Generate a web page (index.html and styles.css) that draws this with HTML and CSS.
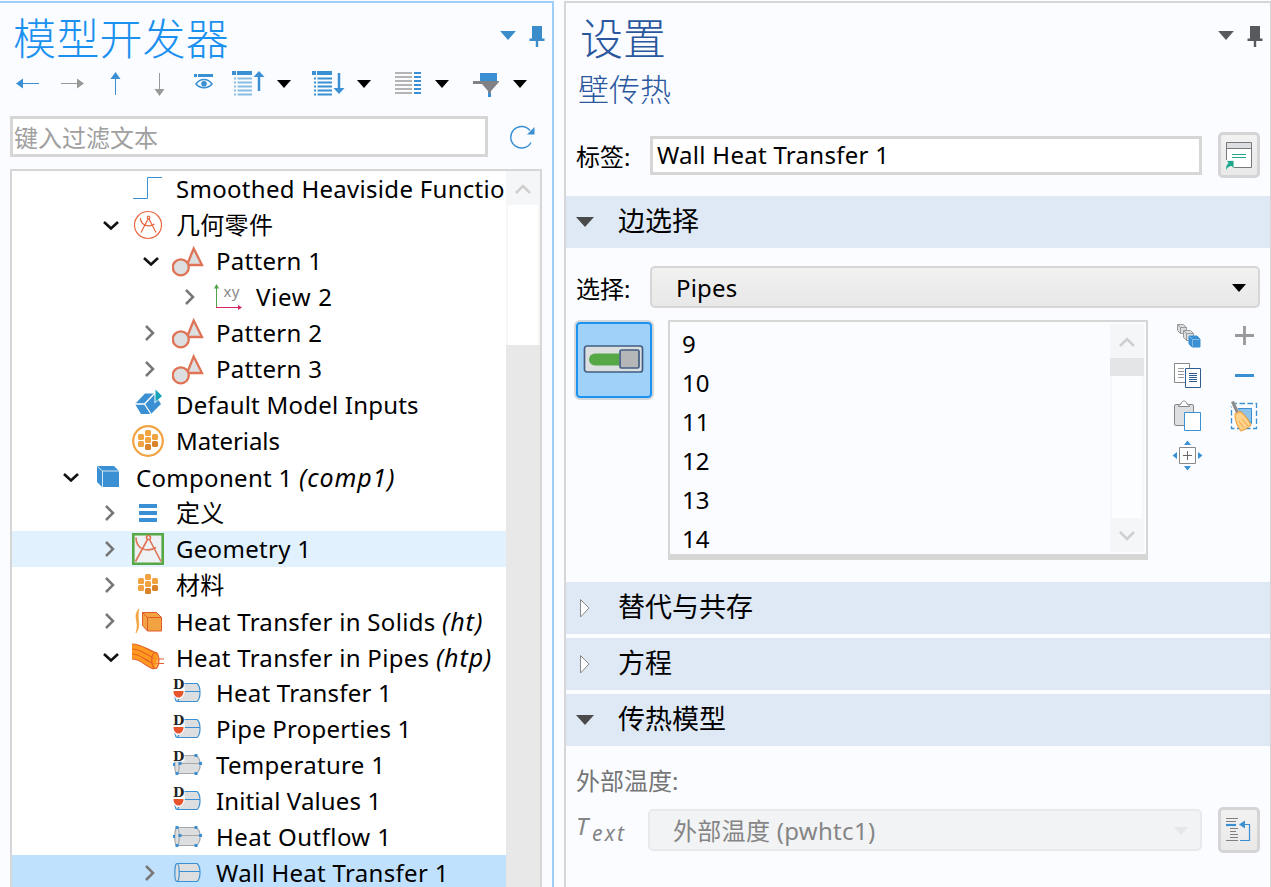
FILE: index.html
```html
<!DOCTYPE html>
<html lang="zh-CN">
<head>
<meta charset="utf-8">
<title>模型开发器</title>
<link rel="stylesheet" href="styles.css">
</head>
<body>
<svg class="defs" width="0" height="0">
  <symbol id="down" viewBox="0 0 24 24"><path d="M6 9l7 6.500L20 9" fill="none" stroke="#111" stroke-width="2.600"/></symbol>
  <symbol id="right" viewBox="0 0 24 24"><path d="M8 5l7 7-7 7" fill="none" stroke="#777" stroke-width="2.500"/></symbol>
  <symbol id="caret" viewBox="0 0 14 8"><path d="M0 0h14L7 8z" fill="currentColor"/></symbol>
  <symbol id="pin" viewBox="0 0 16 22"><path d="M3 0h10v12.500h2.500v2.500H9.200v6H6.800v-6H.5v-2.500H3z" fill="currentColor"/></symbol>
  <symbol id="shapes" viewBox="0 0 32 32"><g fill="#dcdedf" stroke="#e07355" stroke-width="2.300"><path d="M21.700 3.500L15 20h15z"/><circle cx="8.800" cy="22.300" r="8"/></g></symbol>
  <symbol id="grid" viewBox="0 0 32 32"><g fill="#f0a340"><rect x="13" y="5" width="6" height="6" rx="1.500"/><rect x="13" y="12" width="6" height="6" rx="1.500"/><rect x="6" y="9" width="6" height="6" rx="1.500"/><rect x="20" y="9" width="6" height="6" rx="1.500"/><rect x="6" y="16" width="6" height="6" rx="1.500"/></g><g fill="#d9822a"><rect x="20" y="16" width="6" height="6" rx="1.500"/><rect x="13" y="19" width="6" height="6" rx="1.500"/></g></symbol>
  <symbol id="pipe" viewBox="0 0 32 32"><path d="M5 6.500h20c4 3 4 15 0 18H5z" fill="#dcdee0"/><path d="M5 6.500h20c4 3 4 15 0 18H5M7 14.500h21" fill="none" stroke="#3a90d2" stroke-width="1.200"/><ellipse cx="5" cy="15.500" rx="2.200" ry="9" fill="#dcdee0" stroke="#3a90d2" stroke-width="1.200"/></symbol>
  <symbol id="gpipe" viewBox="0 0 32 32"><path d="M5 6.500h19c6 3 6 15 0 18H5z" fill="#dcdee0"/><path d="M5 6.500h19c5.500 3 5.500 15 0 18H5M7 14.500h21" fill="none" stroke="#a5a7aa" stroke-width="1.200"/><ellipse cx="5" cy="15.500" rx="2.200" ry="9" fill="#dcdee0" stroke="#a5a7aa" stroke-width="1.200"/><path d="M3.500 5h3v3h-3zM22.500 5h3v3h-3zM1 14h2v3H1zM6.500 13h3v3h-3zM27 13h3v3h-3zM3.500 23h3v3h-3zM22.500 23h3v3h-3z" fill="#3a90d2"/></symbol>
  <symbol id="dpipe" viewBox="0 0 32 32"><use href="#pipe"/><path d="M0 0h12.500v12H13c0 6-3 10-6.500 10S0 18 0 12z" fill="#fff"/><path d="M1.500 14h10c0 4-2 6.500-5 6.500s-5-2.500-5-6.500z" fill="#e8552d"/></symbol>
</svg>

<main class="workspace">
<section class="builder">
  <header class="builder-head">
    <h1>模型开发器</h1>
    <svg class="head-caret" width="16" height="9"><use href="#caret"/></svg>
    <svg width="16" height="22"><use href="#pin"/></svg>
  </header>

  <div class="toolbar">
    <svg width="25" height="28" viewBox="0 0 25 28"><path d="M6 13.500h18" stroke="#3a90d2"/><path d="M1 13.500l7-5v10z" fill="#3a90d2"/></svg>
    <svg class="t2" width="24" height="28" viewBox="0 0 24 28"><path d="M0 13.500h17" stroke="#999"/><path d="M23 13.500l-7-5v10z" fill="#999"/></svg>
    <svg class="t3" width="12" height="28" viewBox="0 0 12 28"><path d="M5.500 8v17" stroke="#3a90d2"/><path d="M5.500 2l5 7h-10z" fill="#3a90d2"/></svg>
    <svg class="t4" width="12" height="28" viewBox="0 0 12 28"><path d="M5.500 3v18" stroke="#999"/><path d="M5.500 26l5-7h-10z" fill="#999"/></svg>
    <svg class="t5" width="20" height="28" viewBox="0 0 20 28"><path d="M0 4h3v3H0zM4 4h15v3H4z" fill="#3a90d2"/><path d="M2 14c4-6 12-6 16 0-4 5-12 5-16 0z" fill="none" stroke="#3a90d2" stroke-width="1.600"/><circle cx="10" cy="13.700" r="2.800" fill="#3a90d2"/></svg>
    <svg class="t6" width="33" height="28" viewBox="0 0 33 28"><path d="M0 1h4v4H0zM5 1h15v4H5z" fill="#3a90d2"/><path d="M2 8.500h2m1.500 0H20M2 12.500h2m1.500 0H20M2 16.500h2m1.500 0H20M2 20.500h2m1.500 0H20M2 24.500h2m1.500 0H20" stroke="#8abce3" stroke-width="2"/><path d="M27 5v16" stroke="#3a90d2" stroke-width="2.500"/><path d="M27 1l5.500 6h-11z" fill="#3a90d2"/></svg>
    <svg class="c1" width="14" height="8"><use href="#caret"/></svg>
    <svg class="t7" width="33" height="28" viewBox="0 0 33 28"><path d="M0 1h4v4H0zM5 1h15v4H5z" fill="#3a90d2"/><path d="M2 8.500h2m1.500 0H20M2 12.500h2m1.500 0H20M2 16.500h2m1.500 0H20M2 20.500h2m1.500 0H20M2 24.500h2m1.500 0H20" stroke="#3a90d2" stroke-width="2"/><path d="M27 3v16" stroke="#3a90d2" stroke-width="2.500"/><path d="M27 24l5.500-6h-11z" fill="#3a90d2"/></svg>
    <svg class="c2" width="14" height="8"><use href="#caret"/></svg>
    <svg class="t8" width="27" height="28" viewBox="0 0 27 28"><path d="M0 3h17M0 7h17M0 11h17M0 15h17M0 19h17M0 23h17" stroke="#b4b4b4" stroke-width="2"/><path d="M19 3h7M19 7h7M19 11h7M19 15h7M19 19h7M19 23h7" stroke="#3a90d2" stroke-width="2"/></svg>
    <svg class="c3" width="14" height="8"><use href="#caret"/></svg>
    <svg class="t9" width="27" height="28" viewBox="0 0 27 28"><path d="M7 3h17v8H7zM15 23h3v4h-3z" fill="#3a90d2"/><path d="M0 11h26v1l-8 9v2h-3v-2l-6-7H0z" fill="#808286"/></svg>
    <svg class="c4" width="14" height="8"><use href="#caret"/></svg>
  </div>

  <div class="search-row">
    <div class="search">键入过滤文本</div>
    <svg width="26" height="26" viewBox="0 0 26 26"><path d="M21 18.500A10.800 10.800 0 1 1 20 6.500" fill="none" stroke="#3a90d2" stroke-width="1.400"/><path d="M24.500 3v7.500H17z" fill="#3a90d2"/></svg>
  </div>

  <div class="tree">
    <div class="rows">
      <div class="row l2"><i class="tw"></i><svg class="ic" viewBox="0 0 32 32"><path d="M1 25.500h14.500v-21H30" fill="none" stroke="#3a90d2"/></svg><span>Smoothed Heaviside Functio</span></div>
      <div class="row l2"><svg class="tw"><use href="#down"/></svg><svg class="ic" viewBox="0 0 32 32"><g fill="none" stroke="#e8663f" stroke-width="1.200"><circle cx="16" cy="16" r="13.500"/><circle cx="16.500" cy="8.500" r="1.300"/><path d="M16 10L9 23.500M17 10l7 13.500M8.500 9c0 7 8 10 14 6"/></g></svg><span>几何零件</span></div>
      <div class="row l3"><svg class="tw"><use href="#down"/></svg><svg class="ic"><use href="#shapes"/></svg><span>Pattern 1</span></div>
      <div class="row l4"><svg class="tw"><use href="#right"/></svg><svg class="ic" viewBox="0 0 32 32"><path d="M4.500 6v20.500" stroke="#4fa347"/><path d="M4.500 3L7 7.500H2z" fill="#4fa347"/><path d="M4 26.500h23" stroke="#d6245c"/><path d="M30 26.500l-4-2.500v5z" fill="#d6245c"/><text x="11.500" y="16" class="xy">xy</text></svg><span class="wide">View 2</span></div>
      <div class="row l3"><svg class="tw"><use href="#right"/></svg><svg class="ic"><use href="#shapes"/></svg><span>Pattern 2</span></div>
      <div class="row l3"><svg class="tw"><use href="#right"/></svg><svg class="ic"><use href="#shapes"/></svg><span>Pattern 3</span></div>
      <div class="row l2"><i class="tw"></i><svg class="ic" viewBox="0 0 32 32"><path d="M3 15L13 4.500h9L29 15 19 25H9z" fill="#3a90d2"/><path d="M3 15h9.500L22 5M12.500 15l6.500 10" fill="none" stroke="#fff" stroke-width="1.300"/><path d="M22.500-1v15.500L31 7z" fill="#fff"/><path d="M23.500.5v12.500l6.500-6z" fill="#16a2b8"/></svg><span class="mid">Default Model Inputs</span></div>
      <div class="row l2"><i class="tw"></i><svg class="ic" viewBox="0 0 32 32"><circle cx="16" cy="16" r="14.800" fill="#fff" stroke="#f0a340" stroke-width="2.200"/><use href="#grid"/></svg><span class="tight">Materials</span></div>
      <div class="row l1"><svg class="tw"><use href="#down"/></svg><svg class="ic" viewBox="0 0 32 32"><path d="M5 5h17l5 5v16H10l-5-5z" fill="#3a90d2"/><path d="M5.500 5.500l5 4.500H27M10.500 10v16" fill="none" stroke="#d7e9f7"/></svg><span>Component 1 <em>(comp1)</em></span></div>
      <div class="row l2"><svg class="tw"><use href="#right"/></svg><svg class="ic" viewBox="0 0 32 32"><path d="M7 7h18v4H7zM7 14h18v4H7zM7 21h18v4H7z" fill="#3a90d2"/></svg><span>定义</span></div>
      <div class="row l2 hover"><svg class="tw"><use href="#right"/></svg><svg class="ic" viewBox="0 0 32 32"><path d="M1.300 1.300h29.400v29.400H1.300z" fill="#edf1f4" stroke="#55a845" stroke-width="2.600"/><g fill="none" stroke="#e07355" stroke-width="1.600"><circle cx="16.500" cy="4.500" r="2"/><path d="M15.500 6.500L3.500 28.500M17.500 6.500l11.500 22M4 4.500c0 12 11 15 20 10"/></g></svg><span>Geometry 1</span></div>
      <div class="row l2"><svg class="tw"><use href="#right"/></svg><svg class="ic"><use href="#grid"/></svg><span>材料</span></div>
      <div class="row l2"><svg class="tw"><use href="#right"/></svg><svg class="ic" viewBox="0 0 32 32"><path d="M7 4c-7 8 1 12-3 24 6-8 0-14 3-24z" fill="#f0a340" stroke="#f0a340" stroke-width=".7"/><path d="M10.500 7.500h14l5 5v13.500h-14l-5-5.500z" fill="#f0a340" stroke="#e4582b"/><path d="M10.500 7.500l5 5h14M15.500 12.500V26" fill="none" stroke="#e4582b"/></svg><span>Heat Transfer in Solids <em>(ht)</em></span></div>
      <div class="row l2"><svg class="tw"><use href="#down"/></svg><svg class="ic" viewBox="0 0 32 32"><path d="M0 3c10 0 15 6 26 9l-3 16C14 26 10 18 0 18z" fill="#ff9a1f"/><path d="M0 3c10 0 15 6 25 9M0 8c9 0 14 6 22 9M0 13c8 0 13 6 20 9M0 18c10 0 13 8 22 10M20 18h12M21 22.500h11" fill="none" stroke="#e4602b" stroke-width="1.200"/><ellipse cx="23.300" cy="19.500" rx="3.600" ry="8" fill="#ff9a1f" fill-opacity=".7" stroke="#e4602b" stroke-width="1.200"/></svg><span>Heat Transfer in Pipes <em>(htp)</em></span></div>
      <div class="row l3"><i class="tw"></i><svg class="ic" viewBox="0 0 32 32"><use href="#dpipe"/><text x="1" y="11.500" class="d-letter">D</text></svg><span class="mid">Heat Transfer 1</span></div>
      <div class="row l3"><i class="tw"></i><svg class="ic" viewBox="0 0 32 32"><use href="#dpipe"/><text x="1" y="11.500" class="d-letter">D</text></svg><span class="mid">Pipe Properties 1</span></div>
      <div class="row l3"><i class="tw"></i><svg class="ic" viewBox="0 0 32 32"><use href="#gpipe"/><path d="M0 0h12.500v12.500H0z" fill="#fff"/><text x="1" y="11.500" class="d-letter">D</text></svg><span>Temperature 1</span></div>
      <div class="row l3"><i class="tw"></i><svg class="ic" viewBox="0 0 32 32"><use href="#dpipe"/><text x="1" y="11.500" class="d-letter">D</text></svg><span class="low">Initial Values 1</span></div>
      <div class="row l3"><i class="tw"></i><svg class="ic"><use href="#gpipe"/></svg><span class="high">Heat Outflow 1</span></div>
      <div class="row l3 selected"><svg class="tw"><use href="#right"/></svg><svg class="ic"><use href="#pipe"/></svg><span>Wall Heat Transfer 1</span></div>
    </div>
    <div class="scroll">
      <div class="scroll-btn"><svg width="16" height="12" viewBox="0 0 16 12"><path d="M1 10l7-7 7 7" fill="none" stroke="#cfcfcf" stroke-width="2.500"/></svg></div>
      <div class="scroll-gap"></div>
      <div class="scroll-thumb"></div>
    </div>
  </div>
</section>

<section class="settings">
  <header class="settings-head">
    <h2>设置</h2>
    <svg class="head-caret" width="16" height="9"><use href="#caret"/></svg>
    <svg width="16" height="22"><use href="#pin"/></svg>
  </header>
  <h3>壁传热</h3>

  <div class="field name">
    <label>标签:</label>
    <div class="input">Wall Heat Transfer 1</div>
    <div class="button"><svg width="28" height="30" viewBox="0 0 28 30"><path d="M1.500 2.500h25v25h-25z" fill="#fff" stroke="#77797d"/><path d="M2 3h24v5H2z" fill="#dcdee2"/><path d="M1 8.500h25" stroke="#77797d"/><path d="M7 14.500h14M7 17.500h14" stroke="#1fa88e" stroke-width="1.200"/><path d="M-1 20H9v9h-10z" fill="#efefef"/><path d="M2 21h6.500v7l-2-2c-2 0-4 1-5 4-1-3 0-5 2-7z" fill="#1fa88e"/></svg></div>
  </div>

  <div class="section first"><svg width="18" height="10" viewBox="0 0 18 10"><path d="M0 0h18L9 10z" fill="#4a4a4a"/></svg>边选择</div>

  <div class="field choose">
    <label>选择:</label>
    <div class="select"><span class="value">Pipes</span><svg width="14" height="8"><use href="#caret"/></svg></div>
  </div>

  <div class="selection">
    <div class="toggle"><svg width="62" height="30" viewBox="0 0 62 30"><rect x="1.500" y="2" width="58" height="26" rx="2.500" fill="#dcdfe0" stroke="#425d82" stroke-width="1.700"/><path d="M12 9.500h24v12H12a6 6 0 0 1 0-12z" fill="#55a845"/><rect x="37" y="6" width="19" height="18" rx="1.500" fill="#b4b6b8" stroke="#425d82" stroke-width="1.700"/></svg></div>
    <div class="list">
      <div class="items"><div>9</div><div>10</div><div>11</div><div>12</div><div>13</div><div>14</div></div>
      <div class="list-scroll">
        <div class="scroll-btn"><svg width="16" height="12" viewBox="0 0 16 12"><path d="M1 10l7-7 7 7" fill="none" stroke="#cfcfcf" stroke-width="2.500"/></svg></div>
        <div class="thumb"></div>
        <div class="track"></div>
        <div class="scroll-btn"><svg width="16" height="12" viewBox="0 0 16 12"><path d="M1 2l7 7 7-7" fill="none" stroke="#cfcfcf" stroke-width="2.500"/></svg></div>
      </div>
    </div>
    <div class="actions">
      <svg width="32" height="32" viewBox="0 0 32 32"><g stroke="#999" fill="#dcdee0"><path d="M5.500 4.500h6l3 3v6h-6l-3-3z"/><path d="M5.500 4.500l3 3h6m-6 0v6" fill="none"/><path d="M11.500 10.500h7l3 3v7h-7l-3-3z"/><path d="M11.500 10.500l3 3h7m-7 0v7" fill="none"/></g><path d="M17 16h8l3 3v8h-8l-3-3z" fill="#3a90d2" stroke="#3a90d2"/><path d="M17.500 16.500l3 3h7m-7 0v7" fill="none" stroke="#8fc3ea" stroke-width=".8"/></svg>
      <svg width="32" height="32" viewBox="0 0 32 32"><path d="M2.500 3.500h15v19h-15z" fill="#fff" stroke="#888"/><path d="M6 8.500h6M6 11.500h6M6 14.500h6M6 17.500h6" stroke="#999"/><path d="M13.500 8.500h15v19h-15z" fill="#fff" stroke="#2f5c91"/><path d="M17 13.500h8M17 15.500h8M17 17.500h8M17 19.500h8M17 21.500h8" stroke="#2f5c91"/></svg>
      <svg width="32" height="32" viewBox="0 0 32 32"><rect x="2.500" y="4.500" width="19" height="21" rx="1.500" fill="#dcdee0" stroke="#888"/><path d="M6.500 6.500c0-3 3-1 3-4 2-2 3-2 5 0 0 3 3 1 3 4z" fill="#fff" stroke="#888"/><path d="M12.500 12.500h16v18h-16z" fill="#fff" stroke="#3a90d2"/></svg>
      <svg width="32" height="32" viewBox="0 0 32 32"><path d="M7.500 7.500h16v16h-16z" fill="#fff" stroke="#888"/><path d="M15.500 11v9M11 15.500h9" stroke="#666"/><path d="M15.500.500l3.500 4.500h-7zM15.500 30.500l3.500-4.500h-7zM.5 15.500l4.500-3.500v7zM30.500 15.500L26 12v7z" fill="#3a90d2"/></svg>
    </div>
    <div class="actions edit">
      <svg width="32" height="32" viewBox="0 0 32 32"><path d="M16.500 6v19M7 15.500h19" stroke="#999" stroke-width="2.800"/></svg>
      <svg width="32" height="32" viewBox="0 0 32 32"><path d="M7 15.500h19" stroke="#3a90d2" stroke-width="3"/></svg>
      <svg width="32" height="32" viewBox="0 0 32 32"><path d="M3.500 3.500h25v25h-25z" fill="none" stroke="#3a90d2" stroke-width="1.300" stroke-dasharray="5.500 2.500"/><path d="M10 8.500h13.500v15z" fill="#8fc3ea" stroke="#3a90d2"/><path d="M4 2l5 11" stroke="#fff" stroke-width="5"/><path d="M4.500 1.500l5 11" stroke="#8c8c8c" stroke-width="3.200"/><path d="M7 14l5-2.500c5 3 8 8 11 13.500-3 2-5 5-10 6-4-5-6-11-6-17z" fill="#fcd28c" stroke="#f0a340" stroke-width="1.200"/><path d="M11 21l5 7M14 19l6 7" stroke="#f0a340"/></svg>
    </div>
  </div>

  <div class="section"><svg width="18" height="18" viewBox="0 0 18 18"><path d="M4.500.5v17.500l8.500-9z" fill="#fff" stroke="#888"/></svg>替代与共存</div>
  <div class="section"><svg width="18" height="18" viewBox="0 0 18 18"><path d="M4.500.5v17.500l8.500-9z" fill="#fff" stroke="#888"/></svg>方程</div>
  <div class="section"><svg width="18" height="10" viewBox="0 0 18 10"><path d="M0 0h18L9 10z" fill="#4a4a4a"/></svg>传热模型</div>

  <div class="ext-label">外部温度:</div>
  <div class="field ext">
    <div class="symbol"><i>T</i><i class="sub">ext</i></div>
    <div class="select disabled"><span>外部温度 (pwhtc1)</span><svg width="14" height="8"><use href="#caret"/></svg></div>
    <div class="button"><svg width="28" height="30" viewBox="0 0 28 30"><path d="M1 3.500h12M1 6.500h10M5 13.500h8M5 16.500h6M5 19.500h8M5 22.500h8M1 25.500h12" stroke="#808080"/><path d="M1 10h10" stroke="#3a90d2" stroke-width="2.200"/><path d="M18 9.500h6.500v16H15" fill="none" stroke="#3a90d2" stroke-width="1.200"/><path d="M14 9.500l6-4v8z" fill="#3a90d2"/></svg></div>
  </div>
</section>
</main>
</body>
</html>
```
FILE: styles.css
```css
* { box-sizing: border-box; }
html, body { margin: 0; height: 887px; overflow: hidden; }
body {
  background: #fafcff;
  color: #000;
  font: 24px/36px "Noto Sans", "Noto Sans CJK SC", sans-serif;
}
.defs { position: absolute; }
svg { display: block; flex: none; }
h1, h2, h3 { margin: 0; font-weight: 300; font-family: "Noto Sans CJK SC", sans-serif; }
.workspace { display: flex; height: 887px; padding-top: 1px; gap: 10px; overflow: hidden; }

/* Model builder */
.builder {
  display: flex; flex-direction: column; flex: none;
  width: 554px; height: 886px;
  border-top: 2px solid #9dd0f8; border-right: 2px solid #9dd0f8;
}
.builder-head, .settings-head { display: flex; align-items: center; height: 66px; flex: none; }
.builder-head { padding: 0 7px 0 13px; color: #1a90f0; }
.builder-head h1, .settings-head h2 { font-size: 43px; line-height: 62px; padding-bottom: 1px; flex: 1; }
.builder-head h1 { letter-spacing: .2px; }
.builder-head svg, .settings-head svg { color: #3a8ccb; }
.head-caret { margin-right: 13px; margin-top: -1px; }
.head-caret + svg { margin-top: 2px; }

.toolbar { display: flex; align-items: center; height: 28px; padding-left: 15px; margin-top: 1px; flex: none; }
.t2 { margin-left: 21px; }
.t3 { margin-left: 25px; }
.t4 { margin-left: 32px; }
.t5 { margin-left: 28px; }
.t6 { margin-left: 18px; }
.c1 { margin-left: 12px; }
.t7 { margin-left: 21px; }
.c2 { margin-left: 12px; }
.t8 { margin-left: 24px; }
.c3 { margin-left: 13px; }
.t9 { margin-left: 24px; }
.c4 { margin-left: 13px; }

.search-row { display: flex; align-items: center; margin: 18px 0 0 10px; flex: none; }
.search {
  width: 478px; height: 41px; margin-right: 22px; padding-left: 1px;
  border: 3px solid #d6d6d7; background: #fff; color: #a0a0a0;
  line-height: 35px;
  font-family: "Noto Sans CJK SC", sans-serif;
}

.tree {
  display: flex; flex: 1; min-height: 0; overflow: hidden;
  width: 532px; margin: 12px 0 0 10px;
  border: 2px solid #d6d6d7; border-bottom: 0; background: #fff;
}
.rows { width: 494px; letter-spacing: .3px; }
.row { display: flex; align-items: center; height: 36px; white-space: nowrap; }
.row span { margin-left: 12px; }
.row .wide { letter-spacing: .7px; }
.row .high { letter-spacing: .45px; }
.row .mid { letter-spacing: .22px; }
.row .low { letter-spacing: .12px; }
.row .tight { letter-spacing: -.1px; }
.row em { font-size: 25px; letter-spacing: .9px; }
.l1 { padding-left: 46px; }
.l2 { padding-left: 86px; }
.l3 { padding-left: 126px; }
.l4 { padding-left: 166px; }
.hover { background: #e1f1fe; }
.selected { background: #c0e1fd; }
.tw { width: 24px; height: 24px; flex: none; }
.ic { width: 32px; height: 32px; margin-left: 10px; overflow: visible; }
.d-letter { font: bold 13px "DejaVu Serif", serif; fill: #222; }
.xy { font: 15px "Noto Sans", sans-serif; fill: #888; }
.scroll { display: flex; flex-direction: column; width: 34px; }
.scroll-btn { display: flex; align-items: center; justify-content: center; height: 34px; background: #f5f6f7; flex: none; padding-top: 1px; }
.scroll-gap { height: 140px; border: solid #f6f6f6; border-width: 0 2px; }
.scroll-thumb { flex: 1; background: #e8e8e8; }

/* Settings */
.settings {
  width: 707px; height: 886px; flex: none;
  border: solid #d6d6d7; border-width: 2px 1px 0 2px;
}
.settings-head { padding: 0 7px 0 14px; color: #2a579e; }
.settings-head svg { color: #57595c; }
h3 { font-size: 31px; line-height: 38px; height: 40px; padding-left: 12px; color: #2a579e; }
.field { display: flex; align-items: center; padding-left: 10px; }
.name { margin-top: 23px; height: 46px; }
label { width: 74px; padding-top: 3px; }
.input {
  width: 552px; height: 39px; margin-right: 16px; padding-left: 4px;
  border: 3px solid #d6d6d7; background: #fff; line-height: 31px; letter-spacing: .28px;
}
.button {
  display: flex; align-items: center; justify-content: center;
  width: 42px; height: 46px; border: 3px solid #d5d5d7; border-radius: 5px;
  background: linear-gradient(#f2f2f3, #e9e9e9);
}
.section {
  display: flex; align-items: center; height: 52px; margin-bottom: 4px;
  padding-left: 10px; background: #dfe9f5; font-size: 27px; line-height: 48px; padding-bottom: 3px;
}
.section svg { margin: 3px 24px 0 0; }
.section.first { margin: 18px 0; }
.select {
  display: flex; align-items: center; justify-content: space-between;
  width: 610px; height: 42px; padding: 0 12px 0 24px;
  border: 2px solid #d6d6d7; border-radius: 5px;
  background: linear-gradient(#f1f1f2, #e8e8e8);
}
.select svg { margin-top: 1px; }
.value { letter-spacing: .2px; padding-top: 2px; }
.selection { display: flex; margin: 12px 0 22px 8px; height: 240px; }
.toggle {
  display: flex; align-items: center; justify-content: center;
  width: 80px; height: 80px; border: 2px solid #d3d6da; border-radius: 6px;
  background: #9fd1f9; box-shadow: inset 0 0 0 2px #1b93f2; padding-bottom: 2px;
}
.list {
  display: flex; justify-content: space-between; width: 480px; height: 240px; margin-left: 14px;
  border: 2px solid #d6d6d7; border-bottom-width: 6px; padding: 2px;
}
.items { padding-left: 10px; line-height: 39px; }
.list-scroll { display: flex; flex-direction: column; width: 34px; }
.thumb { height: 18px; background: #e4e5e6; }
.track { flex: 1; border: solid #f6f7f9; border-width: 0 2px; background: #fcfdff; }
.actions { display: flex; flex-direction: column; gap: 8px; margin-left: 24px; }
.edit { margin-left: 24px; }
.ext-label { padding: 13px 0 0 10px; color: #757575; }
.ext { margin-top: 8px; }
.symbol { display: flex; width: 72px; color: #858585; padding-bottom: 1px; }
.symbol .sub { font-size: 21px; padding: 7px 0 0 4px; letter-spacing: 2.2px; }
.select.disabled { width: 554px; margin-right: 16px; border-color: #e8e9eb; background: #f2f3f5; color: #858585; padding-left: 23px; letter-spacing: .3px; }
.disabled span { padding-top: 2px; }
.disabled svg { color: #e6e7e9; }
```
